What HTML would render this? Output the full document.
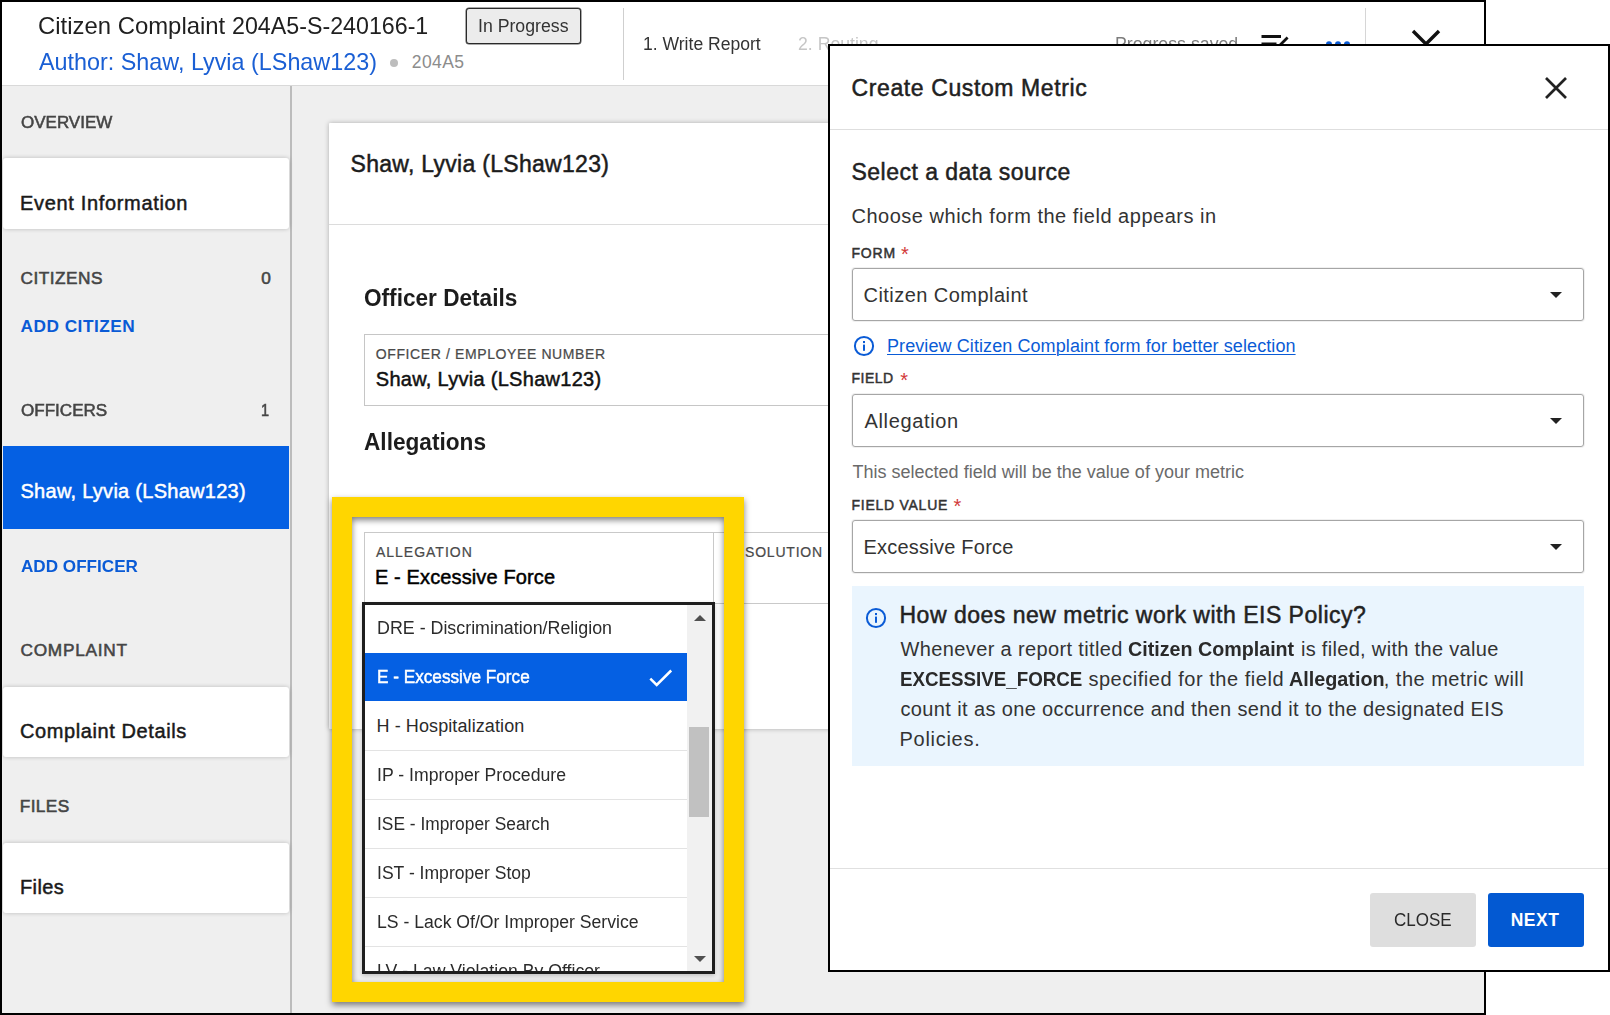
<!DOCTYPE html>
<html lang="en">
<head>
<meta charset="utf-8">
<title>Create Custom Metric</title>
<style>
*{box-sizing:border-box;margin:0;padding:0}
html,body{width:1610px;height:1015px;overflow:hidden;background:#fff}
body{font-family:"Liberation Sans",sans-serif;color:#212121;position:relative}
.a{position:absolute}
.t{position:absolute;white-space:nowrap;line-height:1;transform-origin:0 0}
.t b{font-weight:bold;-webkit-text-stroke:0}
#shot{position:absolute;left:0;top:0;width:1486px;height:1015px;background:#efefef;overflow:hidden}
#shotb{position:absolute;left:0;top:0;width:1486px;height:1015px;border:2px solid #000}
#hdr{position:absolute;left:0;top:0;width:1486px;height:86px;background:#fff;border-bottom:1px solid #d9d9d9}
.card{position:absolute;left:3px;width:286px;background:#fff;border-radius:3px;box-shadow:0 0 4px rgba(0,0,0,.22)}
#main{position:absolute;left:329px;top:123px;width:700px;height:606px;background:#fff;border-radius:1px 0 0 1px;box-shadow:0 0 5px rgba(0,0,0,.28)}
#dd{position:absolute;left:362px;top:602px;width:353px;height:372px;border:3px solid #1e1e1e;background:#fff;overflow:hidden;box-shadow:0 2px 4px rgba(0,0,0,.18)}
.sep{position:absolute;left:0;width:322px;height:1px;background:#e3e3e3}
#frame{position:absolute;left:332px;top:497px;width:412px;height:505px;border:20px solid #ffd600;filter:drop-shadow(0 3px 3px rgba(0,0,0,.5))}
#modal{position:absolute;left:828px;top:44px;width:782px;height:928px;background:#fff;overflow:hidden}
#modalb{position:absolute;left:0;top:0;width:782px;height:928px;border:2px solid #000}
.sel{position:absolute;left:24px;width:732px;height:53px;border:1px solid #a6a6a6;border-radius:3px;background:#fff;box-shadow:0 0 0 1px rgba(0,0,0,.06)}
.arr{position:absolute;left:722.3px;width:0;height:0;border-left:6.7px solid transparent;border-right:6.7px solid transparent;border-top:6.8px solid #222}
</style>
</head>
<body>
<div id="shot">
<div id="hdr"></div>
<!-- header widgets -->
<div class="a" style="left:466px;top:8px;width:115px;height:36px;border:1px solid #2a2a2a;border-radius:3px;background:#ececec;box-shadow:0 0 0 .5px #555"></div>
<div class="a" style="left:390px;top:59px;width:8px;height:8px;border-radius:50%;background:#bdbdbd"></div>
<div class="a" style="left:623px;top:8px;width:1px;height:72px;background:#cfcfcf"></div>
<div class="a" style="left:1365px;top:8px;width:1px;height:72px;background:#d6d6d6"></div>
<svg class="a" style="left:1258px;top:30px" width="36" height="30" viewBox="0 0 36 30"><g fill="none" stroke="#111"><path d="M3.5 6.6H23M3.5 13.9H18.5" stroke-width="3"/><path d="M29.6 7.6L17.6 19.6" stroke-width="2.8"/></g></svg>
<svg class="a" style="left:1322px;top:36px" width="32" height="14" viewBox="0 0 32 14"><g fill="#0a5bd6"><circle cx="7" cy="8.2" r="3"/><circle cx="16" cy="8.2" r="3"/><circle cx="25" cy="8.2" r="3"/></g></svg>
<svg class="a" style="left:1408px;top:26px" width="36" height="36" viewBox="0 0 36 36"><path d="M5 5L31 31M31 5L5 31" stroke="#111" stroke-width="3.4" fill="none"/></svg>
<!-- sidebar -->
<div class="a" style="left:290px;top:86px;width:2px;height:930px;background:#bcbcbc"></div>
<div class="card" style="top:158px;height:71px"></div>
<div class="a" style="left:3px;top:446px;width:286px;height:83px;background:#0560e3"></div>
<div class="card" style="top:686.5px;height:70.5px"></div>
<div class="card" style="top:842.5px;height:70.5px"></div>
<div class="t" style="left:37.75px;top:14px;font-size:24px;color:#1f1f1f;transform:scaleX(0.9954);">Citizen Complaint</div>
<div class="t" style="left:231.53px;top:14px;font-size:24px;color:#1f1f1f;transform:scaleX(0.9678);">204A5-S-240166-1</div>
<div class="t" style="left:38.75px;top:50px;font-size:24px;color:#1a5fd4;transform:scaleX(0.9731);">Author: Shaw, Lyvia (LShaw123)</div>
<div class="t" style="left:411.75px;top:54px;font-size:17.5px;color:#8c8c8c;letter-spacing:0.406px;">204A5</div>
<div class="t" style="left:477.77px;top:17px;font-size:18px;color:#333;transform:scaleX(0.9830);">In Progress</div>
<div class="t" style="left:642.77px;top:35px;font-size:18px;color:#333;transform:scaleX(0.9752);">1. Write Report</div>
<div class="t" style="left:798.00px;top:35px;font-size:18px;color:#c6c6c6;transform:scaleX(0.9809);">2. Routing</div>
<div class="t" style="left:1115.26px;top:35px;font-size:18px;color:#7d7d7d;transform:scaleX(0.9854);">Progress saved</div>
<div class="t" style="left:20.50px;top:114px;font-size:17.25px;color:#454545;-webkit-text-stroke:.55px #454545;transform:scaleX(0.9851);">OVERVIEW</div>
<div class="t" style="left:20.00px;top:193px;font-size:20px;color:#1a1a1a;-webkit-text-stroke:.48px #1a1a1a;letter-spacing:0.667px;">Event Information</div>
<div class="t" style="left:20.50px;top:270px;font-size:17.25px;color:#454545;-webkit-text-stroke:.55px #454545;letter-spacing:0.487px;">CITIZENS</div>
<div class="t" style="left:261.25px;top:270px;font-size:17.25px;color:#454545;-webkit-text-stroke:.55px #454545;letter-spacing:0.250px;">0</div>
<div class="t" style="left:20.50px;top:318px;font-size:17.25px;color:#0a5bd6;font-weight:bold;letter-spacing:0.496px;">ADD CITIZEN</div>
<div class="t" style="left:20.50px;top:402px;font-size:17.25px;color:#454545;-webkit-text-stroke:.55px #454545;transform:scaleX(0.9889);">OFFICERS</div>
<div class="t" style="left:261.16px;top:402px;font-size:17.25px;color:#454545;-webkit-text-stroke:.55px #454545;transform:scaleX(0.8437);">1</div>
<div class="t" style="left:20.50px;top:481px;font-size:20px;color:#fff;-webkit-text-stroke:.48px #fff;letter-spacing:0.275px;">Shaw, Lyvia (LShaw123)</div>
<div class="t" style="left:20.50px;top:558px;font-size:17.25px;color:#0a5bd6;font-weight:bold;transform:scaleX(0.9923);">ADD OFFICER</div>
<div class="t" style="left:20.50px;top:642px;font-size:17.25px;color:#454545;-webkit-text-stroke:.55px #454545;letter-spacing:0.737px;">COMPLAINT</div>
<div class="t" style="left:20.00px;top:721px;font-size:20px;color:#1a1a1a;-webkit-text-stroke:.48px #1a1a1a;letter-spacing:0.598px;">Complaint Details</div>
<div class="t" style="left:19.80px;top:798px;font-size:17.25px;color:#454545;-webkit-text-stroke:.55px #454545;letter-spacing:0.367px;">FILES</div>
<div class="t" style="left:20.00px;top:877px;font-size:20px;color:#1a1a1a;-webkit-text-stroke:.48px #1a1a1a;letter-spacing:0.391px;">Files</div>
<!-- main card -->
<div id="main"></div>
<div class="a" style="left:329px;top:224px;width:700px;height:1px;background:#dcdcdc"></div>
<div class="a" style="left:364px;top:334px;width:600px;height:72px;border:1px solid #c6c6c6;border-right:0"></div>
<div class="a" style="left:364px;top:532px;width:600px;height:72px;border:1px solid #c9c9c9;border-right:0"></div>
<div class="a" style="left:713px;top:532px;width:1px;height:72px;background:#c9c9c9"></div>
<div class="t" style="left:350.50px;top:153px;font-size:23px;color:#1c1c1c;-webkit-text-stroke:.48px #1c1c1c;letter-spacing:0.291px;">Shaw, Lyvia (LShaw123)</div>
<div class="t" style="left:363.75px;top:287px;font-size:23px;color:#1c1c1c;font-weight:bold;transform:scaleX(0.9828);">Officer Details</div>
<div class="t" style="left:375.75px;top:347px;font-size:14px;color:#4a4a4a;-webkit-text-stroke:.22px #4a4a4a;letter-spacing:0.611px;">OFFICER / EMPLOYEE NUMBER</div>
<div class="t" style="left:375.75px;top:369px;font-size:20px;color:#111;-webkit-text-stroke:.48px #111;letter-spacing:0.287px;">Shaw, Lyvia (LShaw123)</div>
<div class="t" style="left:363.75px;top:431px;font-size:23px;color:#1c1c1c;font-weight:bold;transform:scaleX(0.9844);">Allegations</div>
<div class="t" style="left:375.90px;top:545px;font-size:14px;color:#4a4a4a;-webkit-text-stroke:.22px #4a4a4a;letter-spacing:1.002px;">ALLEGATION</div>
<div class="t" style="left:374.90px;top:567px;font-size:20px;color:#000;-webkit-text-stroke:.48px #000;letter-spacing:0.133px;">E - Excessive Force</div>
<div class="t" style="left:724.66px;top:545px;font-size:14px;color:#4a4a4a;-webkit-text-stroke:.22px #4a4a4a;transform:scaleX(0.9384);">RE</div>
<div class="t" style="left:745.00px;top:545px;font-size:14px;color:#4a4a4a;-webkit-text-stroke:.22px #4a4a4a;letter-spacing:0.790px;">SOLUTION</div>
<div id="dd">
<div class="a" style="left:0;top:48px;width:322px;height:48px;background:#0560e3"></div>
<div class="sep" style="top:145px"></div><div class="sep" style="top:194px"></div><div class="sep" style="top:243px"></div><div class="sep" style="top:292px"></div><div class="sep" style="top:341px"></div>
<div class="t" style="left:11.51px;top:14px;font-size:18px;color:#2b2b2b;transform:scaleX(0.9912);">DRE - Discrimination/Religion</div>
<div class="t" style="left:11.55px;top:63px;font-size:18px;color:#fff;-webkit-text-stroke:.48px #fff;transform:scaleX(0.9542);">E - Excessive Force</div>
<div class="t" style="left:11.50px;top:112px;font-size:18px;color:#2b2b2b;letter-spacing:0.094px;">H - Hospitalization</div>
<div class="t" style="left:11.52px;top:161px;font-size:18px;color:#2b2b2b;transform:scaleX(0.9804);">IP - Improper Procedure</div>
<div class="t" style="left:11.54px;top:210px;font-size:18px;color:#2b2b2b;transform:scaleX(0.9643);">ISE - Improper Search</div>
<div class="t" style="left:11.52px;top:259px;font-size:18px;color:#2b2b2b;transform:scaleX(0.9756);">IST - Improper Stop</div>
<div class="t" style="left:11.52px;top:308px;font-size:18px;color:#2b2b2b;transform:scaleX(0.9794);">LS - Lack Of/Or Improper Service</div>
<div class="t" style="left:11.52px;top:357px;font-size:18px;color:#2b2b2b;transform:scaleX(0.9818);">LV - Law Violation By Officer</div>
<svg class="a" style="left:283px;top:62px" width="26" height="22" viewBox="0 0 26 22"><path d="M2.3 11.6L8.7 18L23.2 3.5" fill="none" stroke="#fff" stroke-width="2.5"/></svg>
<div class="a" style="left:322px;top:0;width:25px;height:366px;background:#f1f1f1"></div>
<div class="a" style="left:324px;top:122px;width:20px;height:90px;background:#c1c1c1"></div>
<div class="a" style="left:328.5px;top:10px;width:0;height:0;border-left:6px solid transparent;border-right:6px solid transparent;border-bottom:6.5px solid #505050"></div>
<div class="a" style="left:328.5px;top:351px;width:0;height:0;border-left:6px solid transparent;border-right:6px solid transparent;border-top:6.5px solid #505050"></div>
</div>
<div id="frame"></div>
<div id="shotb"></div>
</div>

<div id="modal">
<div class="a" style="left:0;top:85px;width:781px;height:1px;background:#dedede"></div>
<svg class="a" style="left:716px;top:32px" width="24" height="24" viewBox="0 0 24 24"><path d="M2 2L22 22M22 2L2 22" stroke="#222" stroke-width="2.7" fill="none"/></svg>
<div class="sel" style="top:224px"></div><div class="arr" style="top:248px"></div>
<div class="sel" style="top:350px"></div><div class="arr" style="top:374px"></div>
<div class="sel" style="top:476px"></div><div class="arr" style="top:500px"></div>
<svg class="a" style="left:23.75px;top:290px" width="24" height="24" viewBox="0 0 24 24"><circle cx="12" cy="12" r="9.1" fill="none" stroke="#0a5bd6" stroke-width="2"/><rect x="11" y="10.6" width="2" height="6.2" fill="#0a5bd6"/><rect x="11" y="7" width="2" height="2.1" fill="#0a5bd6"/></svg>
<div class="a" style="left:24px;top:542px;width:732px;height:180px;background:#eaf5fe"></div>
<svg class="a" style="left:36px;top:561.5px" width="24" height="24" viewBox="0 0 24 24"><circle cx="12" cy="12" r="9.1" fill="none" stroke="#0a5bd6" stroke-width="2"/><rect x="11" y="10.6" width="2" height="6.2" fill="#0a5bd6"/><rect x="11" y="7" width="2" height="2.1" fill="#0a5bd6"/></svg>
<div class="a" style="left:0;top:824px;width:781px;height:1px;background:#e0e0e0"></div>
<div class="a" style="left:542px;top:849px;width:106px;height:54px;border-radius:3px;background:#dedede"></div>
<div class="a" style="left:660px;top:849px;width:96px;height:54px;border-radius:3px;background:#0359d2"></div>
<div class="t" style="left:23.50px;top:33px;font-size:23px;color:#212121;-webkit-text-stroke:.48px #212121;letter-spacing:0.609px;">Create Custom Metric</div>
<div class="t" style="left:23.50px;top:117px;font-size:23px;color:#212121;-webkit-text-stroke:.48px #212121;letter-spacing:0.479px;">Select a data source</div>
<div class="t" style="left:23.50px;top:162px;font-size:20px;color:#333;letter-spacing:0.510px;">Choose which form the field appears in</div>
<div class="t" style="left:23.50px;top:202px;font-size:14px;color:#333;-webkit-text-stroke:.48px #333;letter-spacing:0.814px;">FORM</div>
<div class="t" style="left:35.50px;top:241px;font-size:20px;color:#333;letter-spacing:0.458px;">Citizen Complaint</div>
<div class="t" style="left:59.00px;top:293px;font-size:18px;color:#0a5bd6;letter-spacing:0.087px;text-decoration:underline;text-decoration-thickness:1px;text-underline-offset:2px;">Preview Citizen Complaint form for better selection</div>
<div class="t" style="left:23.50px;top:327px;font-size:14px;color:#333;-webkit-text-stroke:.48px #333;letter-spacing:0.481px;">FIELD</div>
<div class="t" style="left:36.50px;top:367px;font-size:20px;color:#333;letter-spacing:0.642px;">Allegation</div>
<div class="t" style="left:24.50px;top:419px;font-size:18px;color:#6a6a6a;letter-spacing:0.006px;">This selected field will be the value of your metric</div>
<div class="t" style="left:23.50px;top:454px;font-size:14px;color:#333;-webkit-text-stroke:.48px #333;letter-spacing:0.740px;">FIELD VALUE</div>
<div class="t" style="left:35.50px;top:493px;font-size:20px;color:#333;letter-spacing:0.225px;">Excessive Force</div>
<div class="t" style="left:71.50px;top:560px;font-size:23px;color:#222;-webkit-text-stroke:.48px #222;letter-spacing:0.505px;">How does new metric work with EIS Policy?</div>
<div class="t" style="left:72.60px;top:595px;font-size:20px;color:#333;letter-spacing:0.365px;">Whenever a report titled</div>
<div class="t" style="left:300.20px;top:595px;font-size:20px;color:#2a2a2a;font-weight:bold;transform:scaleX(0.9839);">Citizen Complaint</div>
<div class="t" style="left:472.90px;top:595px;font-size:20px;color:#333;letter-spacing:0.318px;">is filed, with the value</div>
<div class="t" style="left:71.66px;top:625px;font-size:20px;color:#2a2a2a;font-weight:bold;transform:scaleX(0.9375);">EXCESSIVE_FORCE</div>
<div class="t" style="left:260.40px;top:625px;font-size:20px;color:#333;letter-spacing:0.531px;">specified for the field</div>
<div class="t" style="left:461.10px;top:625px;font-size:20px;color:#2a2a2a;font-weight:bold;transform:scaleX(0.9889);">Allegation</div>
<div class="t" style="left:555.80px;top:625px;font-size:20px;color:#333;letter-spacing:0.481px;">, the metric will</div>
<div class="t" style="left:72.50px;top:655px;font-size:20px;color:#333;letter-spacing:0.372px;">count it as one occurrence and then send it to the designated EIS</div>
<div class="t" style="left:71.50px;top:685px;font-size:20px;color:#333;letter-spacing:0.722px;">Policies.</div>
<div class="t" style="left:566.00px;top:868px;font-size:17.5px;color:#2a2a2a;transform:scaleX(0.9718);">CLOSE</div>
<div class="t" style="left:682.70px;top:868px;font-size:17.5px;color:#fff;font-weight:bold;letter-spacing:0.501px;">NEXT</div>
<div class="t" style="left:73px;top:200px;font-size:20px;color:#d23a3a">*</div><div class="t" style="left:72.3px;top:326px;font-size:20px;color:#d23a3a">*</div><div class="t" style="left:125.6px;top:452px;font-size:20px;color:#d23a3a">*</div>
<div id="modalb"></div>
</div>
</body>
</html>
